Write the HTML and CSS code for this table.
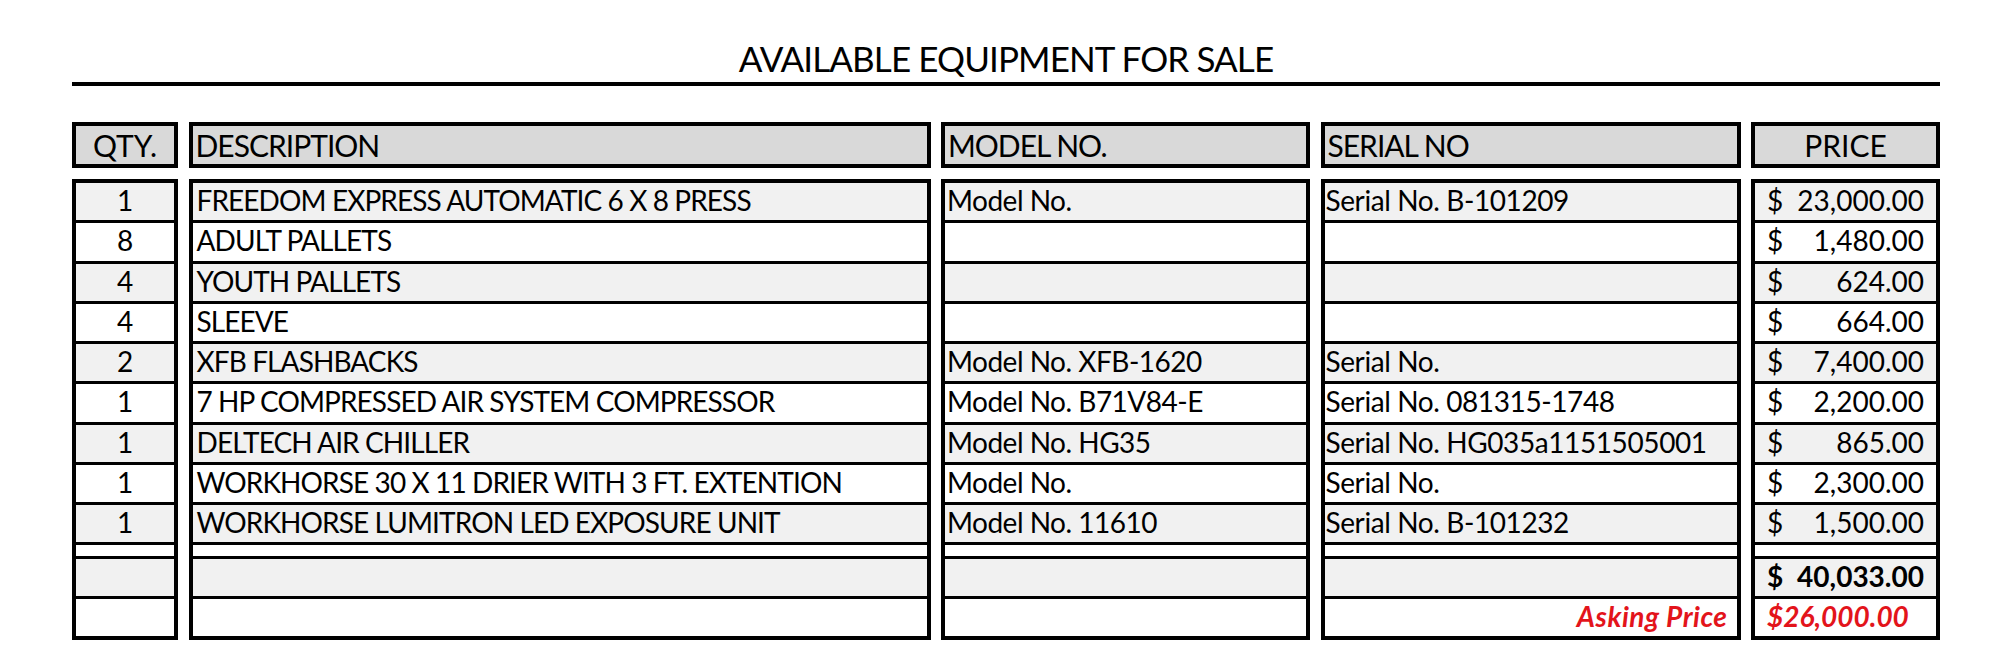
FILE: index.html
```html
<!DOCTYPE html>
<html lang="en">
<head>
<meta charset="utf-8">
<title>Available Equipment For Sale</title>
<link rel="stylesheet" href="styles.css">
</head>
<body>
<div class="page">
  <h1 class="title">AVAILABLE EQUIPMENT FOR SALE</h1>

  <div class="grid head">
    <div class="cell center">QTY.</div>
    <div class="cell">DESCRIPTION</div>
    <div class="cell">MODEL NO.</div>
    <div class="cell">SERIAL NO</div>
    <div class="cell center">PRICE</div>
  </div>

  <div class="grid body">
    <div class="row alt first">
      <div class="cell center">1</div>
      <div class="cell desc">FREEDOM EXPRESS AUTOMATIC 6 X 8 PRESS</div>
      <div class="cell model">Model No.</div>
      <div class="cell serial">Serial No. B-101209</div>
      <div class="cell price"><span>$</span><span>23,000.00</span></div>
    </div>
    <div class="row">
      <div class="cell center">8</div>
      <div class="cell desc">ADULT PALLETS</div>
      <div class="cell model"></div>
      <div class="cell serial"></div>
      <div class="cell price"><span>$</span><span>1,480.00</span></div>
    </div>
    <div class="row alt">
      <div class="cell center">4</div>
      <div class="cell desc">YOUTH PALLETS</div>
      <div class="cell model"></div>
      <div class="cell serial"></div>
      <div class="cell price"><span>$</span><span>624.00</span></div>
    </div>
    <div class="row">
      <div class="cell center">4</div>
      <div class="cell desc">SLEEVE</div>
      <div class="cell model"></div>
      <div class="cell serial"></div>
      <div class="cell price"><span>$</span><span>664.00</span></div>
    </div>
    <div class="row alt">
      <div class="cell center">2</div>
      <div class="cell desc">XFB FLASHBACKS</div>
      <div class="cell model">Model No. XFB-1620</div>
      <div class="cell serial">Serial No.</div>
      <div class="cell price"><span>$</span><span>7,400.00</span></div>
    </div>
    <div class="row">
      <div class="cell center">1</div>
      <div class="cell desc">7 HP COMPRESSED AIR SYSTEM COMPRESSOR</div>
      <div class="cell model">Model No. B71V84-E</div>
      <div class="cell serial">Serial No. 081315-1748</div>
      <div class="cell price"><span>$</span><span>2,200.00</span></div>
    </div>
    <div class="row alt">
      <div class="cell center">1</div>
      <div class="cell desc">DELTECH AIR CHILLER</div>
      <div class="cell model">Model No. HG35</div>
      <div class="cell serial">Serial No. HG035a1151505001</div>
      <div class="cell price"><span>$</span><span>865.00</span></div>
    </div>
    <div class="row">
      <div class="cell center">1</div>
      <div class="cell desc">WORKHORSE 30 X 11 DRIER WITH 3 FT. EXTENTION</div>
      <div class="cell model">Model No.</div>
      <div class="cell serial">Serial No.</div>
      <div class="cell price"><span>$</span><span>2,300.00</span></div>
    </div>
    <div class="row alt">
      <div class="cell center">1</div>
      <div class="cell desc">WORKHORSE LUMITRON LED EXPOSURE UNIT</div>
      <div class="cell model">Model No. 11610</div>
      <div class="cell serial">Serial No. B-101232</div>
      <div class="cell price"><span>$</span><span>1,500.00</span></div>
    </div>
    <div class="row spacer">
      <div class="cell"></div>
      <div class="cell"></div>
      <div class="cell"></div>
      <div class="cell"></div>
      <div class="cell"></div>
    </div>
    <div class="row alt">
      <div class="cell"></div>
      <div class="cell"></div>
      <div class="cell"></div>
      <div class="cell"></div>
      <div class="cell price total"><span>$</span><span>40,033.00</span></div>
    </div>
    <div class="row last">
      <div class="cell"></div>
      <div class="cell"></div>
      <div class="cell"></div>
      <div class="cell serial asking-label">Asking Price</div>
      <div class="cell asking">$26,000.00</div>
    </div>
  </div>
</div>
</body>
</html>
```

FILE: styles.css
```css
html, body {
  margin: 0;
  padding: 0;
  background: #ffffff;
}

body {
  font-family: Lato, "Open Sans", "Liberation Sans", sans-serif;
  color: #000000;
}

.page {
  width: 1868px;
  padding: 0 59px 0 72px;
}

.title {
  margin: 0;
  padding: 38px 0 4px;
  font-size: 35px;
  font-weight: 400;
  line-height: 40px;
  letter-spacing: -0.9px;
  text-align: center;
  border-bottom: 4px solid #000000;
}

.grid {
  display: grid;
  grid-template-columns: 106px 742px 369px 420px 189px;
  column-gap: 10.5px;
}

.row {
  display: contents;
}

.head {
  margin-top: 36px;
}

.head .cell {
  background: #d9d9d9;
  border: 4px solid #000000;
  height: 38px;
  line-height: 38px;
  font-size: 30px;
  letter-spacing: -1px;
  padding: 0 3px;
  white-space: nowrap;
}

.body {
  margin-top: 11px;
}

.body .cell {
  border-left: 4px solid #000000;
  border-right: 4px solid #000000;
  border-bottom: 3px solid #000000;
  height: 34px;
  padding-bottom: 3.27px;
  line-height: 34px;
  font-size: 28px;
  letter-spacing: -0.9px;
  white-space: nowrap;
  overflow: hidden;
  background: #ffffff;
}

.body .row.alt .cell {
  background: #f1f1f1;
}

.body .row.first .cell {
  border-top: 4px solid #000000;
}

.body .row.spacer .cell {
  height: 10.6px;
  padding-bottom: 0;
}

.body .row.last .cell {
  border-bottom-width: 4px;
  height: 34px;
  padding-bottom: 3px;
}

.cell.center {
  text-align: center;
  letter-spacing: 0;
}

.cell.desc {
  padding-left: 4px;
}

.body .cell.model {
  padding-left: 2px;
  letter-spacing: -0.5px;
}

.body .cell.serial {
  padding-left: 1px;
  letter-spacing: -0.4px;
}

.body .cell.price {
  display: flex;
  justify-content: space-between;
  padding-left: 12px;
  padding-right: 12px;
  letter-spacing: 0;
}

.cell.price.total {
  font-weight: 700;
}

.body .cell.asking-label {
  text-align: right;
  padding-right: 9px;
  color: #e3141b;
  font-weight: 700;
  font-style: italic;
  letter-spacing: 0.5px;
}

.body .cell.asking {
  padding-left: 12px;
  color: #e3141b;
  font-weight: 700;
  font-style: italic;
  letter-spacing: 0;
}
```
